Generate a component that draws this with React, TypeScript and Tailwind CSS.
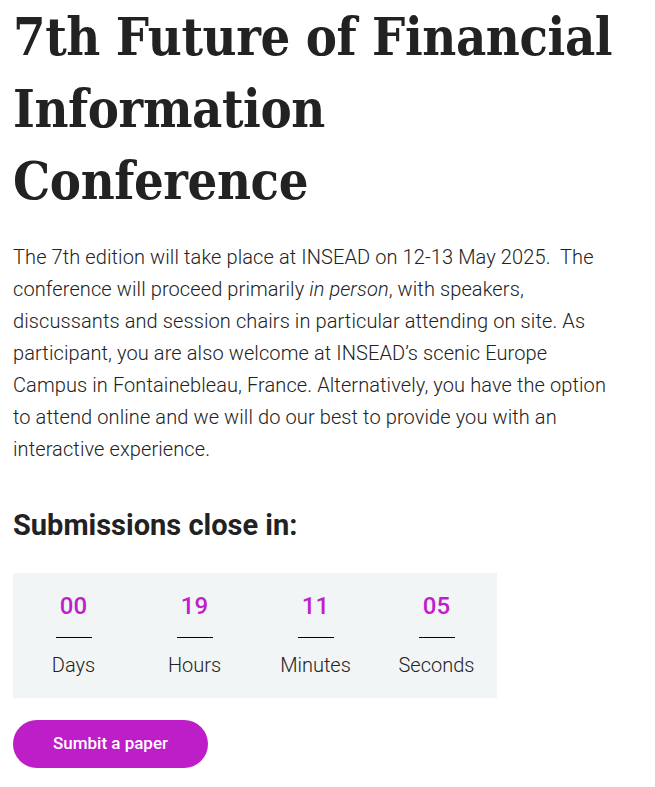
const units = [
  { value: '00', label: 'Days' },
  { value: '19', label: 'Hours' },
  { value: '11', label: 'Minutes' },
  { value: '05', label: 'Seconds' },
];

export default function App() {
  return (
    <div className="min-h-screen bg-white px-[13px] text-[#222222]" style={{ fontFamily: 'Roboto, "Liberation Sans", sans-serif' }}>
      <h1 className="w-[610px] pt-[1px] text-[52px] font-bold leading-[72px] tracking-[-0.4px]" style={{ fontFamily: '"DejaVu Serif Condensed", "DejaVu Serif", serif' }}>
        7th Future of Financial Information Conference
      </h1>
      <p className="mt-[24px] w-[594px] text-[20px] font-light leading-[32px] tracking-[0.1px]">
        The 7th edition will take place at INSEAD on 12-13 May 2025.&nbsp; The conference will proceed primarily <em>in person</em>, with speakers,
        <br />
        discussants and session chairs in particular attending on site. As participant, you are also welcome at INSEAD’s scenic Europe Campus in
        Fontainebleau, France. Alternatively, you have the option to attend online and we will do our best to provide you with an interactive
        experience.
      </p>
      <h2 className="mt-[40px] text-[29px] font-bold leading-[40px]">Submissions close in:</h2>
      <div className="mt-[28px] flex w-[484px] bg-[#f1f5f5] pt-[16px] pb-[19px]">
        {units.map((u) => (
          <div key={u.label} className="flex w-[121px] flex-col items-center">
            <div className="text-[24px] font-medium leading-[34px] text-[#bf1fcb]">{u.value}</div>
            <div className="mt-[14px] h-px w-[36px] bg-black" />
            <div className="mt-[13px] text-[20px] font-light leading-[28px] text-[#222222]">{u.label}</div>
          </div>
        ))}
      </div>
      <button className="mt-[22px] h-[48px] w-[195px] rounded-full bg-[#bd1ec8] text-[17px] font-medium text-white">
        Sumbit a paper
      </button>
    </div>
  );
}
